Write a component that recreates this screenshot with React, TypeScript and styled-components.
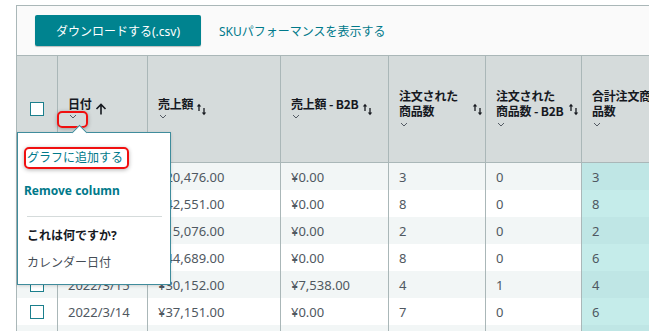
import React from "react";
import styled, { createGlobalStyle } from "styled-components";

const GlobalStyle = createGlobalStyle`
  html, body { margin: 0; padding: 0; background: #ffffff; overflow: hidden; }
  body { font-family: "Noto Sans", "Noto Sans CJK JP", sans-serif; color: #16191f; }
  * { box-sizing: border-box; }
`;

const Page = styled.div`
  padding: 5px 0 0 16px;
  width: 760px;
`;

const Panel = styled.div`
  position: relative;
  border-top: 1px solid #aab7b8;
  border-left: 1px solid #aab7b8;
  width: 700px;
`;

const Toolbar = styled.div`
  height: 50px;
  display: flex;
  align-items: center;
  gap: 18px;
  padding-left: 18px;
  background: #fafafa;
  border-bottom: 1px solid #aab7b8;
`;

const PrimaryButton = styled.button`
  height: 31px;
  width: 166px;
  border: none;
  border-radius: 2px;
  background: #00838f;
  color: #ffffff;
  font-family: "Noto Sans", "Noto Sans CJK JP", sans-serif;
  font-size: 12px;
  box-shadow: 0 1px 1px rgba(0, 0, 0, 0.25);
  padding: 0;
`;

const TextLink = styled.span`
  color: #00798a;
  font-size: 12px;
`;

const Grid = styled.div`
  display: grid;
  grid-template-columns: 40px 90px 133px 108px 97px 96px 96px;
  grid-template-rows: 107px;
  grid-auto-rows: 27px;
`;

const HeadCell = styled.div<{ $first?: boolean }>`
  background: #d5dbdb;
  border-bottom: 1px solid #aab7b8;
  border-left: ${(p) => (p.$first ? "none" : "1px solid #aab7b8")};
  display: flex;
  align-items: center;
  justify-content: ${(p) => (p.$first ? "center" : "flex-start")};
  gap: 3px;
  padding: ${(p) => (p.$first ? "0" : "0 2px 0 10px")};
`;

const Label = styled.div`
  flex: 0 1 auto;
  min-width: 0;
  display: flex;
  flex-direction: column;
`;

const LabelText = styled.div`
  font-family: "Noto Sans CJK JP", sans-serif;
  font-size: 12px;
  line-height: 15px;
  font-weight: 700;
  letter-spacing: -0.2px;
  color: #16191f;
`;

const ChevronRow = styled.div`
  height: 12px;
  display: flex;
  align-items: center;
  padding-left: 1px;
`;

const IconSlot = styled.div`
  flex: 0 0 auto;
  display: flex;
  align-items: center;
`;

const Cell = styled.div<{ $first?: boolean; $alt?: boolean; $hl?: boolean }>`
  border-left: ${(p) => (p.$first ? "none" : "1px solid #aab7b8")};
  background: ${(p) =>
    p.$hl ? (p.$alt ? "#bfe6e5" : "#c5ecea") : p.$alt ? "#f2f6f6" : "#ffffff"};
  display: flex;
  align-items: center;
  justify-content: ${(p) => (p.$first ? "center" : "flex-start")};
  padding-left: ${(p) => (p.$first ? "0" : "10px")};
  font-size: 13px;
  color: #4f5861;
  white-space: nowrap;
`;

const Checkbox = styled.span`
  display: inline-block;
  width: 14px;
  height: 14px;
  border: 1px solid #1b7f8d;
  background: #ffffff;
`;

const Popover = styled.div`
  position: absolute;
  left: 0;
  top: 126px;
  width: 154px;
  height: 153px;
  background: #ffffff;
  border: 1px solid #3f8c9c;
  box-shadow: 0 1px 3px rgba(0, 0, 0, 0.15);
  padding: 14px 8px 0 6px;
  display: flex;
  flex-direction: column;
  align-items: flex-start;
  &::before {
    content: "";
    position: absolute;
    left: 56px;
    top: -6px;
    width: 10px;
    height: 10px;
    background: #ffffff;
    border-top: 1px solid #3f8c9c;
    border-left: 1px solid #3f8c9c;
    transform: rotate(45deg);
  }
`;

const Annotated = styled.span`
  display: inline-block;
  border: 2px solid #f01010;
  border-radius: 5px;
  padding: 1px 4px 1px 1px;
  box-shadow: 0 1px 4px rgba(0, 0, 0, 0.3);
`;

const MenuLink = styled.div<{ $bold?: boolean }>`
  color: #00798a;
  font-size: 12px;
  line-height: 16px;
  font-weight: ${(p) => (p.$bold ? 700 : 400)};
`;

const MenuGap = styled.div<{ $h: number }>`
  height: ${(p) => p.$h}px;
`;

const Divider = styled.div`
  align-self: stretch;
  margin-left: 3px;
  height: 1px;
  background: #d5dbdb;
`;

const MenuTitle = styled.div`
  font-size: 12px;
  line-height: 16px;
  font-weight: 700;
  color: #16191f;
  padding-left: 3px;
`;

const MenuText = styled.div`
  font-size: 12px;
  line-height: 16px;
  color: #444c55;
  padding-left: 3px;
`;

const Callout = styled.div`
  position: absolute;
  left: 40px;
  top: 105px;
  width: 31px;
  height: 17px;
  border: 2px solid #f01010;
  border-radius: 5px;
  box-shadow: 0 1px 4px rgba(0, 0, 0, 0.3);
`;

const Chevron = () => (
  <svg width="8" height="5" viewBox="0 0 8 5">
    <path d="M1 1 L4 4 L7 1" fill="none" stroke="#545b64" strokeWidth="1" />
  </svg>
);

const SortBoth = () => (
  <svg width="11" height="13" viewBox="0 0 11 13">
    <path d="M3 2.5 V8" stroke="#16191f" strokeWidth="1.3" />
    <path d="M0.8 3.6 L3 0.8 L5.2 3.6 Z" fill="#16191f" />
    <path d="M8 5 V10.5" stroke="#16191f" strokeWidth="1.3" />
    <path d="M5.8 9.4 L8 12.2 L10.2 9.4 Z" fill="#16191f" />
  </svg>
);

const SortUp = () => (
  <svg width="12" height="12" viewBox="0 0 12 12">
    <path d="M6 11.5 V1.5 M1.5 6 L6 1.5 L10.5 6" fill="none" stroke="#16191f" strokeWidth="1.6" />
  </svg>
);

type Col = { label: string; sort: "up" | "both" };
const columns: Col[] = [
  { label: "日付", sort: "up" },
  { label: "売上額", sort: "both" },
  { label: "売上額 - B2B", sort: "both" },
  { label: "注文された商品数", sort: "both" },
  { label: "注文された商品数 - B2B", sort: "both" },
  { label: "合計注文商品数", sort: "both" },
];

const rows: string[][] = [
  ["2022/3/19", "¥20,476.00", "¥0.00", "3", "0", "3"],
  ["2022/3/18", "¥42,551.00", "¥0.00", "8", "0", "8"],
  ["2022/3/17", "¥15,076.00", "¥0.00", "2", "0", "2"],
  ["2022/3/16", "¥44,689.00", "¥0.00", "8", "0", "6"],
  ["2022/3/15", "¥30,152.00", "¥7,538.00", "4", "1", "4"],
  ["2022/3/14", "¥37,151.00", "¥0.00", "7", "0", "6"],
  ["2022/3/13", "¥28,410.00", "¥0.00", "5", "0", "5"],
];

export default function App() {
  return (
    <>
      <GlobalStyle />
      <Page>
        <Panel>
          <Toolbar>
            <PrimaryButton>ダウンロードする(.csv)</PrimaryButton>
            <TextLink>SKUパフォーマンスを表示する</TextLink>
          </Toolbar>
          <Grid>
            <HeadCell $first>
              <Checkbox />
            </HeadCell>
            {columns.map((c) => (
              <HeadCell key={c.label}>
                <Label>
                  <LabelText>{c.label}</LabelText>
                  <ChevronRow>
                    <Chevron />
                  </ChevronRow>
                </Label>
                <IconSlot>{c.sort === "up" ? <SortUp /> : <SortBoth />}</IconSlot>
              </HeadCell>
            ))}
            {rows.map((r, i) => (
              <React.Fragment key={i}>
                <Cell $first $alt={i % 2 === 0}>
                  <Checkbox />
                </Cell>
                {r.map((v, j) => (
                  <Cell key={j} $alt={i % 2 === 0} $hl={j === 5}>
                    {v}
                  </Cell>
                ))}
              </React.Fragment>
            ))}
          </Grid>
          <Callout />
          <Popover>
            <Annotated>
              <MenuLink>グラフに追加する</MenuLink>
            </Annotated>
            <MenuGap $h={14} />
            <MenuLink $bold>Remove column</MenuLink>
            <MenuGap $h={17} />
            <Divider />
            <MenuGap $h={11} />
            <MenuTitle>これは何ですか?</MenuTitle>
            <MenuGap $h={11} />
            <MenuText>カレンダー日付</MenuText>
          </Popover>
        </Panel>
      </Page>
    </>
  );
}
